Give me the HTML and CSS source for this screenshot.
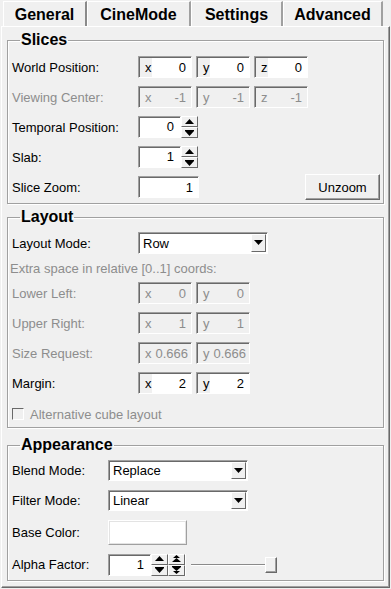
FILE: index.html
```html
<!DOCTYPE html>
<html lang="en">
<head>
    <meta charset="UTF-8">
    <title>Slice View Settings</title>
    <link rel="stylesheet" href="styles.css">
</head>
<body>
    <div class="tabs">
        <div class="tab tab-general active">General</div>
        <div class="tab tab-cine">CineMode</div>
        <div class="tab tab-settings">Settings</div>
        <div class="tab tab-advanced">Advanced</div>
    </div>

    <div class="panel">
        <fieldset class="group slices">
            <legend>Slices</legend>

            <div class="row">
                <span class="label">World Position:</span>
                <div class="field"><span class="pre">x</span><span class="val">0</span></div>
                <div class="field"><span class="pre">y</span><span class="val">0</span></div>
                <div class="field"><span class="pre">z</span><span class="val">0</span></div>
            </div>

            <div class="row disabled">
                <span class="label">Viewing Center:</span>
                <div class="field"><span class="pre">x</span><span class="val">-1</span></div>
                <div class="field"><span class="pre">y</span><span class="val">-1</span></div>
                <div class="field"><span class="pre">z</span><span class="val">-1</span></div>
            </div>

            <div class="row">
                <span class="label">Temporal Position:</span>
                <div class="spin">
                    <span class="spin-val">0</span>
                    <div class="spin-btns">
                        <span class="sb"><svg width="9" height="6" viewBox="0 0 9 6"><path d="M4.5 0 L9 5 L0 5 Z" fill="#000"/></svg></span>
                        <span class="sb"><svg width="9" height="6" viewBox="0 0 9 6"><rect x="0" y="0" width="9" height="1" fill="#000"/><path d="M0 1 L9 1 L4.5 6 Z" fill="#000"/></svg></span>
                    </div>
                </div>
            </div>

            <div class="row">
                <span class="label">Slab:</span>
                <div class="spin">
                    <span class="spin-val">1</span>
                    <div class="spin-btns">
                        <span class="sb"><svg width="9" height="6" viewBox="0 0 9 6"><path d="M4.5 0 L9 5 L0 5 Z" fill="#000"/></svg></span>
                        <span class="sb"><svg width="9" height="6" viewBox="0 0 9 6"><rect x="0" y="0" width="9" height="1" fill="#000"/><path d="M0 1 L9 1 L4.5 6 Z" fill="#000"/></svg></span>
                    </div>
                </div>
            </div>

            <div class="row">
                <span class="label">Slice Zoom:</span>
                <div class="field wide"><span class="val">1</span></div>
                <button class="btn unzoom">Unzoom</button>
            </div>
        </fieldset>

        <fieldset class="group layout">
            <legend>Layout</legend>

            <div class="row">
                <span class="label">Layout Mode:</span>
                <div class="choice layout-choice">
                    <span class="choice-text">Row</span>
                    <span class="choice-btn"><svg width="9" height="6" viewBox="0 0 9 6"><path d="M0 0 L9 0 L4.5 5 Z" fill="#000"/></svg></span>
                </div>
            </div>

            <div class="note">Extra space in relative [0..1] coords:</div>

            <div class="row disabled">
                <span class="label">Lower Left:</span>
                <div class="field"><span class="pre">x</span><span class="val">0</span></div>
                <div class="field"><span class="pre">y</span><span class="val">0</span></div>
            </div>

            <div class="row disabled">
                <span class="label">Upper Right:</span>
                <div class="field"><span class="pre">x</span><span class="val">1</span></div>
                <div class="field"><span class="pre">y</span><span class="val">1</span></div>
            </div>

            <div class="row disabled">
                <span class="label">Size Request:</span>
                <div class="field"><span class="pre">x</span><span class="val left">0.666</span></div>
                <div class="field"><span class="pre">y</span><span class="val left">0.666</span></div>
            </div>

            <div class="row">
                <span class="label">Margin:</span>
                <div class="field"><span class="pre">x</span><span class="val">2</span></div>
                <div class="field"><span class="pre">y</span><span class="val">2</span></div>
            </div>

            <div class="check-row">
                <span class="checkbox"></span>
                <span class="check-label">Alternative cube layout</span>
            </div>
        </fieldset>

        <fieldset class="group appearance">
            <legend>Appearance</legend>

            <div class="row row-short">
                <span class="label">Blend Mode:</span>
                <div class="choice app-choice">
                    <span class="choice-text">Replace</span>
                    <span class="choice-btn"><svg width="9" height="6" viewBox="0 0 9 6"><path d="M0 0 L9 0 L4.5 5 Z" fill="#000"/></svg></span>
                </div>
            </div>

            <div class="row row-short">
                <span class="label">Filter Mode:</span>
                <div class="choice app-choice">
                    <span class="choice-text">Linear</span>
                    <span class="choice-btn"><svg width="9" height="6" viewBox="0 0 9 6"><path d="M0 0 L9 0 L4.5 5 Z" fill="#000"/></svg></span>
                </div>
            </div>

            <div class="row row-color">
                <span class="label">Base Color:</span>
                <div class="color-btn"></div>
            </div>

            <div class="row row-short">
                <span class="label">Alpha Factor:</span>
                <div class="alpha">
                    <span class="spin-val">1</span>
                    <div class="spin-btns">
                        <span class="sb"><svg width="9" height="6" viewBox="0 0 9 6"><path d="M4.5 0 L9 5 L0 5 Z" fill="#000"/></svg></span>
                        <span class="sb"><svg width="9" height="6" viewBox="0 0 9 6"><rect x="0" y="0" width="9" height="1" fill="#000"/><path d="M0 1 L9 1 L4.5 6 Z" fill="#000"/></svg></span>
                    </div>
                    <div class="spin-btns">
                        <span class="sb"><svg width="9" height="8" viewBox="0 0 9 8"><path d="M4.5 0 L8 3 L1 3 Z M4.5 3 L9 7 L0 7 Z" fill="#000"/></svg></span>
                        <span class="sb"><svg width="9" height="8" viewBox="0 0 9 8"><rect x="0" y="0" width="9" height="1" fill="#000"/><path d="M0 1 L9 1 L4.5 5 Z M1 5 L8 5 L4.5 8 Z" fill="#000"/></svg></span>
                    </div>
                </div>
                <div class="slider">
                    <span class="track"></span>
                    <span class="handle"></span>
                </div>
            </div>
        </fieldset>
    </div>
</body>
</html>
```

FILE: styles.css
```css
* {
    margin: 0;
    padding: 0;
    box-sizing: border-box;
}

body {
    width: 391px;
    height: 589px;
    background: #f0f0f0;
    font-family: 'Liberation Sans', Arial, sans-serif;
    font-size: 13px;
    color: #000;
    overflow: hidden;
}

/* tabs */

.tabs {
    display: flex;
    height: 26px;
    padding-left: 3px;
    padding-top: 1px;
}

.tab {
    height: 25px;
    font-weight: bold;
    font-size: 16px;
    line-height: 25px;
    text-align: center;
    border-left: 1px solid #fff;
    border-top: 1px solid #fff;
    border-right: 2px solid #a0a0a0;
}

.tab.active {
    border-right-color: #8a8a8a;
}

.tab-general { width: 84px; }
.tab-cine { width: 104px; }
.tab-settings { width: 92px; }
.tab-advanced { width: 100px; }

/* panel */

.panel {
    width: 389px;
    height: 562px;
    margin-left: 1px;
    border-top: 1px solid #fff;
    border-left: 1px solid #fff;
    border-right: 1px solid #696969;
    border-bottom: 1px solid #696969;
    box-shadow: inset -1px -1px 0 #a0a0a0;
    padding: 4px 0 0 5px;
}

.group {
    width: 377px;
    border: 1px solid #a0a0a0;
    box-shadow: 1px 1px 0 #fff, inset 1px 1px 0 #fff;
    padding: 0 0 5px 4px;
}

.group legend {
    font-weight: bold;
    font-size: 16px;
    line-height: 18px;
    margin-left: 8px;
    padding: 0 1px;
}

.slices {
    padding-top: 7px;
}

.layout {
    margin-top: 4px;
    padding-top: 6px;
}

.appearance {
    margin-top: 8px;
    padding-top: 6px;
}

/* rows */

.row {
    display: flex;
    align-items: center;
    gap: 4px;
    height: 22px;
    margin-bottom: 8px;
}

.row:last-child {
    margin-bottom: 0;
}

.label {
    width: 122px;
}

.appearance .label {
    width: 92px;
}

.disabled {
    color: #8d8d8d;
}

.note {
    color: #8d8d8d;
    height: 14px;
    line-height: 14px;
    margin: 0 0 6px -2px;
}

/* inputs */

.field {
    display: flex;
    width: 54px;
    height: 22px;
    border: 1px solid #fff;
    border-top-color: #a0a0a0;
    border-left-color: #a0a0a0;
    box-shadow: inset 1px 1px 0 #696969;
    background: #fff;
    line-height: 19px;
}

.field .pre {
    width: 12px;
    padding-left: 5px;
    background: #f0f0f0;
    margin: 1px 0 0 1px;
}

.field .val {
    flex: 1;
    text-align: right;
    padding-right: 5px;
    padding-top: 1px;
}

.field .val.left {
    text-align: left;
    padding-left: 4px;
}

.disabled .field {
    background: #f0f0f0;
}

.field.wide {
    width: 61px;
}

.spin {
    display: flex;
    width: 60px;
    height: 22px;
}

.spin-val {
    width: 43px;
    height: 22px;
    line-height: 19px;
    text-align: right;
    padding-right: 6px;
    background: #fff;
    border: 1px solid #fff;
    border-top-color: #a0a0a0;
    border-left-color: #a0a0a0;
    box-shadow: inset 1px 1px 0 #696969;
}

.spin-btns {
    display: flex;
    flex-direction: column;
    width: 17px;
    height: 22px;
}

.sb {
    flex: 1;
    display: flex;
    align-items: center;
    justify-content: center;
    background: #f0f0f0;
    border: 1px solid #696969;
    border-top-color: #fff;
    border-left-color: #fff;
}

.btn {
    font-family: inherit;
    font-size: 13px;
    color: #000;
    background: #f0f0f0;
    border: 1px solid #696969;
    border-top-color: #fff;
    border-left-color: #fff;
    box-shadow: inset -1px -1px 0 #a0a0a0;
}

.unzoom {
    width: 75px;
    height: 26px;
    margin-left: auto;
    margin-right: 3px;
    flex-shrink: 0;
}

.choice {
    display: flex;
    align-items: center;
    height: 22px;
    background: #fff;
    border: 1px solid #fff;
    border-top-color: #a0a0a0;
    border-left-color: #a0a0a0;
    box-shadow: inset 1px 1px 0 #696969;
    padding: 1px;
}

.layout-choice {
    width: 130px;
}

.app-choice {
    width: 140px;
    height: 21px;
}

.choice-text {
    flex: 1;
    padding-left: 3px;
}

.choice-btn {
    width: 15px;
    height: 100%;
    display: flex;
    align-items: center;
    justify-content: center;
    background: #f0f0f0;
    border: 1px solid #696969;
    border-top-color: #fff;
    border-left-color: #fff;
}

.row-short {
    height: 21px;
    margin-bottom: 9px;
}

.row-color {
    height: 25px;
    margin-bottom: 9px;
}

.color-btn {
    width: 79px;
    height: 25px;
    background: #fff;
    border: 1px solid #a0a0a0;
    border-top-color: #fff;
    border-left-color: #fff;
    box-shadow: inset -1px -1px 0 #fff;
    outline: 1px solid #e3e3e3;
    outline-offset: -2px;
}

.alpha {
    display: flex;
    height: 22px;
    background: #fff;
    padding-right: 1px;
}

.alpha .spin-val {
    width: 43px;
}

.alpha .spin-btns {
    width: 17px;
}

.slider {
    display: flex;
    align-items: center;
    width: 86px;
    height: 16px;
    margin-left: 1px;
}

.track {
    flex: 1;
    height: 2px;
    border-top: 1px solid #8a8a8a;
    border-bottom: 1px solid #fff;
}

.handle {
    width: 12px;
    height: 16px;
    background: #f0f0f0;
    border: 1px solid #696969;
    border-top-color: #fff;
    border-left-color: #fff;
    box-shadow: inset -1px -1px 0 #a0a0a0;
}

/* checkbox */

.check-row {
    display: flex;
    align-items: center;
    gap: 6px;
    height: 20px;
    margin-top: 10px;
    color: #8d8d8d;
}

.layout {
    padding-bottom: 3px;
}

.checkbox {
    width: 12px;
    height: 12px;
    border: 1px solid #fff;
    border-top-color: #696969;
    border-left-color: #696969;
    background: #f0f0f0;
}
```
